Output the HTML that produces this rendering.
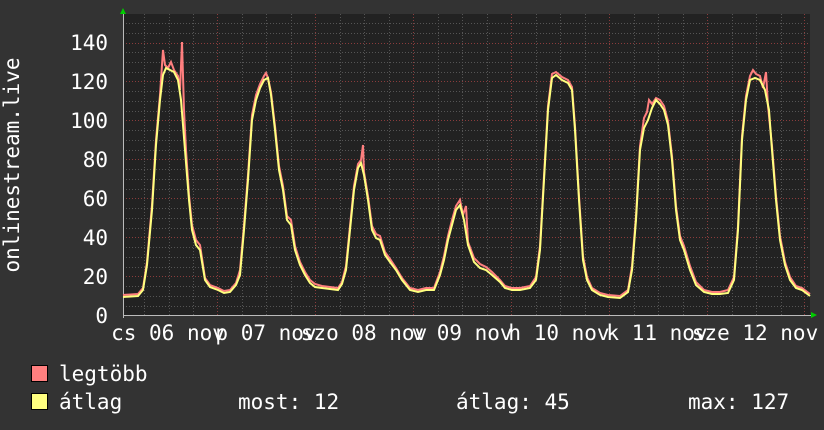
<!DOCTYPE html>
<html><head><meta charset="utf-8"><style>
html,body{margin:0;padding:0;background:#333;}
svg{display:block}
text{font-family:"DejaVu Sans Mono","Liberation Mono",monospace;fill:#fff;font-size:21px}
</style></head><body>
<svg width="824" height="430" viewBox="0 0 824 430" xmlns="http://www.w3.org/2000/svg">
<rect width="824" height="430" fill="#333"/>
<rect x="123" y="14" width="687" height="301" fill="#222"/>
<g stroke="#555" stroke-width="1" stroke-dasharray="1,2">
<path d="M123 23.5H810M123 33.5H810M123 52.5H810M123 62.5H810M123 72.5H810M123 91.5H810M123 101.5H810M123 111.5H810M123 130.5H810M123 140.5H810M123 150.5H810M123 169.5H810M123 179.5H810M123 189.5H810M123 208.5H810M123 218.5H810M123 228.5H810M123 247.5H810M123 257.5H810M123 267.5H810M123 286.5H810M123 296.5H810M123 306.5H810"/>
<path d="M144.5 14V315M169.5 14V315M193.5 14V315M242.5 14V315M266.5 14V315M291.5 14V315M340.5 14V315M364.5 14V315M389.5 14V315M438.5 14V315M462.5 14V315M487.5 14V315M536.5 14V315M560.5 14V315M585.5 14V315M634.5 14V315M658.5 14V315M683.5 14V315M732.5 14V315M756.5 14V315M781.5 14V315"/>
</g>
<g stroke="#8a3c3c" stroke-width="1" stroke-dasharray="1,2">
<path d="M123 43.5H810M123 81.5H810M123 120.5H810M123 159.5H810M123 198.5H810M123 237.5H810M123 276.5H810"/>
<path d="M217.5 14V315M315.5 14V315M413.5 14V315M511.5 14V315M609.5 14V315M707.5 14V315M804.5 14V315"/>
</g>
<path d="M123 315.5H812" stroke="#bbb" stroke-width="1"/>
<path d="M123.5 12V318" stroke="#bbb" stroke-width="1"/>
<polygon points="123,8 120,14 126,14" fill="#0c0"/>
<polygon points="817,315 811,312 811,318" fill="#0c0"/>
<polyline fill="none" stroke="#ff7f7f" stroke-width="2" points="123,295 138,294 143,288 147,262 152,205 156,140 160,95 163,50 165,65 168,68 171,62 174,70 178,76 180,90 182,42 184,110 186,150 189,195 192,225 196,240 200,245 205,278 210,285 218,288 224,291 230,290 236,283 240,270 244,225 248,175 252,115 256,95 260,84 264,76 266,73 268,78 271,92 275,126 279,166 283,186 287,216 291,220 295,246 300,262 305,272 310,280 315,284 322,286 330,287 338,288 342,282 346,266 350,226 354,186 358,164 361,160 363,145 364,172 368,196 372,226 376,234 380,236 385,252 390,259 396,268 402,278 410,288 418,290 426,288 434,288 440,272 444,256 448,236 452,220 456,206 460,200 463,215 466,206 468,242 474,258 480,264 486,267 492,272 500,280 505,286 512,288 520,288 530,286 536,277 540,246 544,176 548,106 552,74 556,72 562,77 568,80 572,87 575,126 579,196 583,256 587,277 592,288 600,293 608,295 620,296 628,290 632,266 636,216 640,146 644,118 647,112 649,100 652,104 656,98 660,100 664,106 668,121 672,156 676,206 680,236 684,246 690,266 696,282 704,290 712,292 720,292 728,290 734,277 738,226 742,136 746,96 750,76 753,70 756,74 760,76 763,88 766,72 768,106 772,146 776,196 780,236 785,262 790,277 796,286 802,288 810,294"/>
<polyline fill="none" stroke="#ffff7f" stroke-width="2" points="123,297 138,296 143,290 147,265 152,210 156,145 160,100 163,75 166,68 170,70 174,72 178,80 181,100 185,150 189,200 192,230 196,245 200,250 205,280 210,287 218,290 224,293 230,292 236,285 240,275 244,230 248,180 252,120 256,100 260,88 264,80 268,78 271,95 275,130 279,170 283,190 287,220 291,225 295,250 300,265 305,275 310,283 315,287 322,288 330,289 338,290 342,284 346,270 350,230 354,190 358,168 361,163 364,175 368,200 372,230 376,238 380,240 385,255 390,262 396,270 402,280 410,290 418,292 426,290 434,290 440,275 444,260 448,240 452,225 456,210 460,205 464,220 468,245 474,262 480,268 486,270 492,275 500,282 505,288 512,290 520,290 530,288 536,280 540,250 544,180 548,110 552,78 556,75 562,80 568,83 572,90 575,130 579,200 583,260 587,280 592,290 600,295 608,297 620,298 628,292 632,270 636,220 640,150 644,128 648,120 652,108 656,100 660,104 664,110 668,125 672,160 676,210 680,240 684,250 690,270 696,285 704,292 712,294 720,294 728,293 734,280 738,230 742,140 746,100 750,80 755,78 760,80 765,90 769,110 772,150 776,200 780,240 785,265 790,280 796,288 802,290 810,296"/>
<g text-anchor="end">
<text x="108" y="50">140</text><text x="108" y="89">120</text><text x="108" y="128">100</text><text x="108" y="167">80</text><text x="108" y="206">60</text><text x="108" y="245">40</text><text x="108" y="284">20</text><text x="108" y="323">0</text>
</g>
<text transform="translate(19,165) rotate(-90)" text-anchor="middle">onlinestream.live</text>
<g text-anchor="middle">
<text x="168" y="340">cs 06 nov</text><text x="266" y="340">p 07 nov</text><text x="364" y="340">szo 08 nov</text><text x="462" y="340">v 09 nov</text><text x="559" y="340">h 10 nov</text><text x="657" y="340">k 11 nov</text><text x="755" y="340">sze 12 nov</text>
</g>
<rect x="31.5" y="365.5" width="16" height="16" fill="#ff7f7f" stroke="#000"/>
<rect x="31.5" y="393.5" width="16" height="16" fill="#ffff7f" stroke="#000"/>
<text x="59" y="381">legtöbb</text>
<text x="59" y="409">átlag</text>
<text x="238" y="409">most: 12</text>
<text x="456" y="409">átlag: 45</text>
<text x="688" y="409">max: 127</text>
</svg>
</body></html>
